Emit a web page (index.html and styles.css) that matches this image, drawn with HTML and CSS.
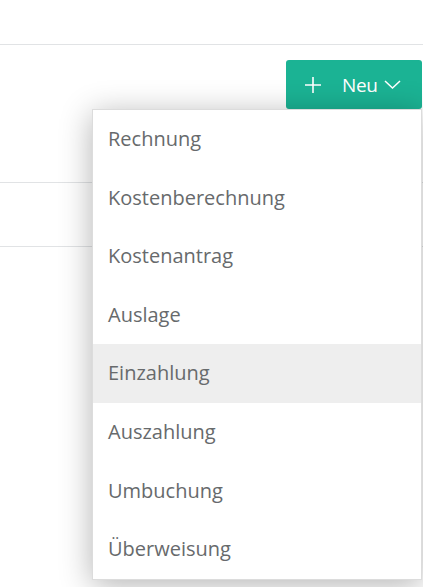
FILE: index.html
```html
<!DOCTYPE html>
<html lang="de">
<head>
<meta charset="utf-8">
<link rel="stylesheet" href="styles.css">
</head>
<body>
<div class="topbar"></div>
<div class="toolbar">
  <button class="btn-new">
    <svg class="plus" width="16" height="16" viewBox="0 0 16 16"><path d="M8 0V16M0 8H16" stroke="#fff" stroke-width="1.6" fill="none"/></svg>
    <span class="label">Neu</span>
    <svg class="chev" width="17" height="9" viewBox="0 0 17 9"><path d="M1 1L8.5 8L16 1" stroke="#fff" stroke-width="1.5" fill="none"/></svg>
  </button>
  <ul class="menu">
    <li>Rechnung</li>
    <li>Kostenberechnung</li>
    <li>Kostenantrag</li>
    <li>Auslage</li>
    <li class="active">Einzahlung</li>
    <li>Auszahlung</li>
    <li>Umbuchung</li>
    <li>Überweisung</li>
  </ul>
</div>
<div class="rows">
  <div class="row"></div>
</div>
</body>
</html>
```
FILE: styles.css
```css
html, body {
  margin: 0;
  padding: 0;
  background: #fff;
  font-family: "Open Sans", "Liberation Sans", sans-serif;
  color: #676a6c;
}
body {
  min-height: 587px;
}
.topbar {
  height: 44px;
  border-bottom: 1px solid #e1e3e5;
}
.toolbar {
  position: relative;
  z-index: 2;
  display: flex;
  justify-content: flex-end;
  padding: 15px 1px 0 0;
}
.btn-new {
  display: flex;
  align-items: center;
  width: 136px;
  height: 49px;
  border: none;
  border-radius: 3px;
  background: #1bb394;
  color: #fff;
  font-family: "Open Sans", "Liberation Sans", sans-serif;
  font-size: 19px;
  padding: 0 0 0 19px;
  cursor: pointer;
}
.plus { flex: none; }
.label { margin-left: 21px; letter-spacing: -0.3px; }
.chev { margin-left: 6px; flex: none; }
.menu {
  position: absolute;
  top: 64px;
  left: 92px;
  right: 1px;
  margin: 0;
  padding: 0;
  list-style: none;
  background: #fff;
  border: 1px solid #dcdcdc;
  box-shadow: 0 5px 30px rgba(0, 0, 0, 0.3);
}
.menu li {
  height: 58.6px;
  line-height: 58.6px;
  padding-left: 15px;
  font-size: 20px;
  color: #676a6c;
}
.menu li.active {
  background: #eeeeee;
}
.rows {
  margin-top: 73px;
  border-top: 1px solid #e1e3e5;
}
.row {
  height: 63px;
  border-bottom: 1px solid #e1e3e5;
}
```
